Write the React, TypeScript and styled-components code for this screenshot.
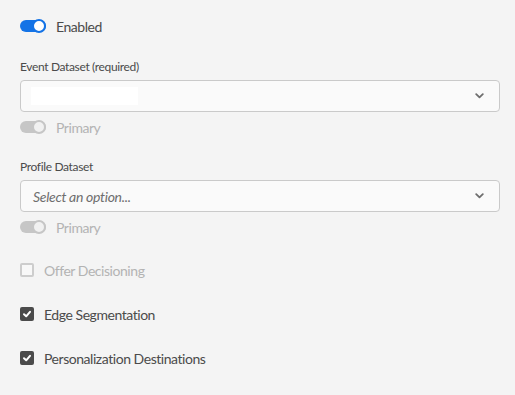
import React from 'react';
import styled, { createGlobalStyle } from 'styled-components';

const GlobalStyle = createGlobalStyle`
  html, body {
    margin: 0;
    padding: 0;
    background: #f4f4f4;
  }
  body {
    font-family: 'Lato', 'Open Sans', sans-serif;
  }
`;

const Page = styled.div`
  width: 515px;
  height: 395px;
  box-sizing: border-box;
  padding: 16px 15px 0 20px;
  display: flex;
  flex-direction: column;
  background: #f4f4f4;
`;

const Row = styled.label<{ $mt?: number }>`
  display: flex;
  align-items: center;
  height: 20px;
  margin-top: ${(p) => p.$mt ?? 0}px;
`;

const Track = styled.span<{ $on?: boolean; $disabled?: boolean }>`
  position: relative;
  width: 26px;
  height: 12px;
  border-radius: 7px;
  background: ${(p) => (p.$disabled ? '#c6c6c6' : p.$on ? '#1473e6' : '#8e8e8e')};
  flex: none;

  &::after {
    content: '';
    position: absolute;
    top: -1px;
    left: ${(p) => (p.$on || p.$disabled ? '12px' : '-1px')};
    width: 10px;
    height: 10px;
    border-radius: 50%;
    background: ${(p) => (p.$disabled ? '#f1f1f1' : '#fff')};
    border: 2px solid ${(p) => (p.$disabled ? '#c6c6c6' : '#1473e6')};
  }
`;

const RowText = styled.span<{ $disabled?: boolean; $indent: number }>`
  margin-left: ${(p) => p.$indent}px;
  font-size: 14px;
  letter-spacing: -0.45px;
  color: ${(p) => (p.$disabled ? '#b3b3b3' : '#4b4b4b')};
`;

const FieldLabel = styled.div<{ $mt: number }>`
  margin-top: ${(p) => p.$mt}px;
  height: 16px;
  line-height: 16px;
  font-size: 12px;
  letter-spacing: -0.35px;
  color: #4b4b4b;
`;

const Picker = styled.div`
  margin-top: 5px;
  height: 32px;
  box-sizing: border-box;
  border: 1px solid #cacaca;
  border-radius: 4px;
  background: #fafafa;
  display: flex;
  align-items: center;
  padding: 0 15px 0 12px;
`;

const Placeholder = styled.span`
  flex: 1;
  font-size: 14px;
  font-style: italic;
  letter-spacing: -0.3px;
  color: #6e6e6e;
`;

const Redacted = styled.span`
  display: block;
  width: 107px;
  height: 18px;
  margin-left: -2px;
  background: #ffffff;
`;

const Spacer = styled.span`
  flex: 1;
`;

const Box = styled.span<{ $checked?: boolean; $disabled?: boolean }>`
  width: 14px;
  height: 14px;
  box-sizing: border-box;
  border-radius: 2px;
  flex: none;
  display: flex;
  align-items: center;
  justify-content: center;
  background: ${(p) => (p.$checked ? '#4b4b4b' : '#f8f8f8')};
  border: 2px solid ${(p) => (p.$disabled ? '#cdcdcd' : '#4b4b4b')};
`;

const Chevron = () => (
  <svg width="9" height="6" viewBox="0 0 9 6">
    <path d="M1.2 1.2 L4.5 4.4 L7.8 1.2" fill="none" stroke="#6e6e6e" strokeWidth="1.8" strokeLinecap="round" strokeLinejoin="round" />
  </svg>
);

const Check = () => (
  <svg width="10" height="10" viewBox="0 0 10 10">
    <path d="M2 5.2 L4.2 7.3 L8 2.8" fill="none" stroke="#fff" strokeWidth="2" strokeLinecap="round" strokeLinejoin="round" />
  </svg>
);

const Switch: React.FC<{ on?: boolean; disabled?: boolean; text: string; mt?: number }> = ({ on, disabled, text, mt }) => (
  <Row $mt={mt}>
    <Track $on={on} $disabled={disabled} />
    <RowText $indent={10} $disabled={disabled}>{text}</RowText>
  </Row>
);

const Checkbox: React.FC<{ checked?: boolean; disabled?: boolean; text: string; mt: number }> = ({ checked, disabled, text, mt }) => (
  <Row $mt={mt}>
    <Box $checked={checked} $disabled={disabled}>{checked && <Check />}</Box>
    <RowText $indent={10} $disabled={disabled}>{text}</RowText>
  </Row>
);

const App: React.FC = () => (
  <>
    <GlobalStyle />
    <Page>
      <Switch on text="Enabled" />

      <FieldLabel $mt={23}>Event Dataset (required)</FieldLabel>
      <Picker>
        <Redacted />
        <Spacer />
        <Chevron />
      </Picker>
      <Switch disabled text="Primary" mt={5} />

      <FieldLabel $mt={22}>Profile Dataset</FieldLabel>
      <Picker>
        <Placeholder>Select an option...</Placeholder>
        <Chevron />
      </Picker>
      <Switch disabled text="Primary" mt={5} />

      <Checkbox disabled text="Offer Decisioning" mt={23} />
      <Checkbox checked text="Edge Segmentation" mt={24} />
      <Checkbox checked text="Personalization Destinations" mt={24} />
    </Page>
  </>
);

export default App;
